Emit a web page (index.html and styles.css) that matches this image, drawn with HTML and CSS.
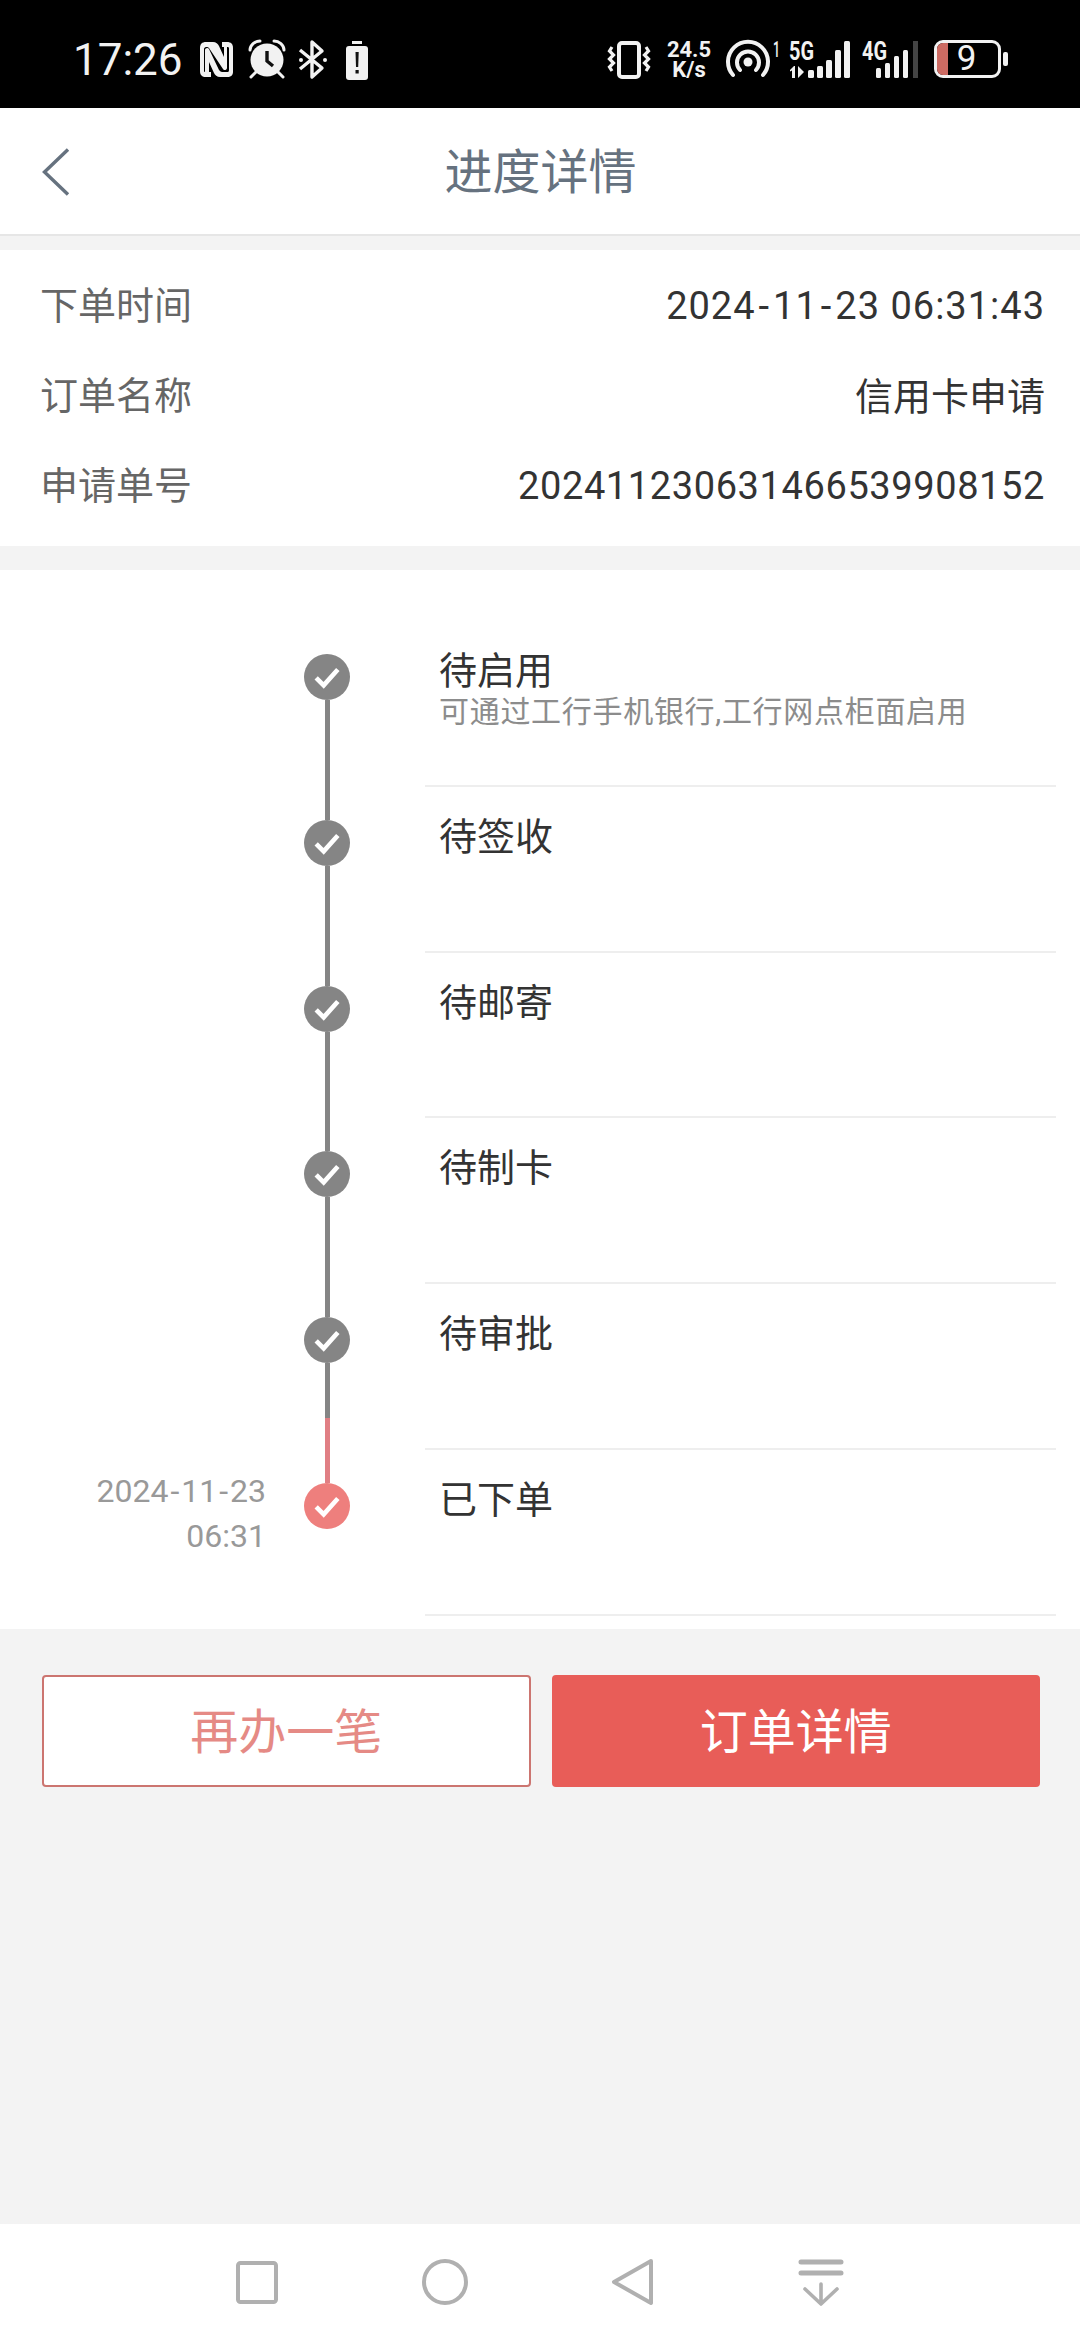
FILE: index.html
```html
<!DOCTYPE html>
<html lang="zh-CN">
<head>
    <meta charset="UTF-8">
    <meta name="viewport" content="width=device-width, initial-scale=1.0">
    <title>进度详情</title>
    <link rel="stylesheet" href="styles.css">
</head>
<body>
<div class="page">
    <!-- status bar: svg viewBoxes use the page coordinates of the screenshot -->
    <div class="status-bar">
        <span class="clock">17:26</span>
        <svg class="ic ic-nfc" viewBox="199 40 35 40"><path fill="#f2f2f2" fill-rule="evenodd" d="M206 42h7c3 0 5 2 6 4l5 11V47h-2l0-5h5c4 0 6 2 6 6v24c0 3-2 5-6 5h-7c-3 0-5-2-6-4l-5-11v10h2v5h-5c-4 0-6-2-6-6V48c0-4 2-6 6-6zm0 5c-1 0-2 1-2 2v22c0 1 1 1 2 1h-1V50c0-2 3-3 4-1l10 21c1 1 2 2 3 2h5c1 0 2 0 2-2V48c0-1-1-1-2-1v21c0 2-3 3-4 1L209 48c-1-1-1-1-3-1z"/></svg>
        <svg class="ic ic-alarm" viewBox="248 40 38 40"><circle cx="267" cy="60" r="16.500" fill="#f2f2f2"/><path d="M250 50c0-5 5-9 10-9M284 50c0-5-5-9-10-9M256 72l-5 5M278 72l5 5" stroke="#f2f2f2" stroke-width="3" fill="none" stroke-linecap="round"/><path d="M267 51v10l6 5" stroke="#111" stroke-width="3.400" fill="none"/></svg>
        <svg class="ic ic-bt" viewBox="298 40 30 40"><path d="M300 50l22 18-10 9V42l10 9-22 18" stroke="#f2f2f2" stroke-width="3.400" fill="none" stroke-linejoin="round"/><circle cx="301" cy="60" r="2" fill="#f2f2f2"/><circle cx="325" cy="60" r="2" fill="#f2f2f2"/></svg>
        <svg class="ic ic-charge" viewBox="346 40 22 40"><rect x="352" y="41" width="10" height="3" fill="#f2f2f2"/><rect x="346" y="46" width="22" height="34" rx="3" fill="#f2f2f2"/><path d="M355.500 52h3.200l-.5 15h-2.200zM355.500 70h3.200v3.500h-3.200z" fill="#111"/></svg>

        <div class="status-right">
            <svg class="ic ic-vibrate" viewBox="608 40 42 40"><rect x="619" y="43" width="20" height="34" rx="3" fill="none" stroke="#f2f2f2" stroke-width="4"/><path d="M612 47l-2.500 4 4 4-4 4 4 4-4 4 2.500 4M646 47l2.500 4-4 4 4 4-4 4 4 4-2.500 4" fill="none" stroke="#f2f2f2" stroke-width="3.200"/></svg>
            <div class="speed"><span>24.5</span><span>K/s</span></div>
            <svg class="ic ic-hotspot" viewBox="727 40 42 40"><circle cx="748" cy="62" r="4.500" fill="#f2f2f2"/><path d="M733 75a20 20 0 1 1 30 0M740 70a11 11 0 1 1 16 0" fill="none" stroke="#f2f2f2" stroke-width="4" stroke-linecap="round"/></svg>
            <svg class="ic ic-sim1" viewBox="773 40 78 40">
                <text x="773" y="57" class="sig-num" textLength="7" lengthAdjust="spacingAndGlyphs">1</text>
                <text x="789" y="60" class="sig-text" textLength="25" lengthAdjust="spacingAndGlyphs">5G</text>
                <path d="M794 66l-4 4v1.500l2-1V78h3V66zM798 66l6 6-6 6z" fill="#f2f2f2"/>
                <rect x="808" y="70" width="6" height="8" rx="1.500" fill="#f2f2f2"/>
                <rect x="817" y="66" width="6" height="12" rx="1.500" fill="#f2f2f2"/>
                <rect x="826" y="60" width="6" height="18" rx="1.500" fill="#f2f2f2"/>
                <rect x="835" y="50" width="6" height="28" rx="1.500" fill="#f2f2f2"/>
                <rect x="844" y="41" width="6" height="37" rx="1.500" fill="#f2f2f2"/>
            </svg>
            <svg class="ic ic-sim2" viewBox="862 40 57 40">
                <text x="862" y="60" class="sig-text" textLength="25" lengthAdjust="spacingAndGlyphs">4G</text>
                <rect x="876" y="68" width="5" height="10" rx="1.500" fill="#f2f2f2"/>
                <rect x="885" y="63" width="5" height="15" rx="1.500" fill="#f2f2f2"/>
                <rect x="894" y="56" width="5" height="22" rx="1.500" fill="#f2f2f2"/>
                <rect x="903" y="50" width="5" height="28" rx="1.500" fill="#f2f2f2"/>
                <rect x="913" y="41" width="5" height="37" fill="#444"/>
            </svg>
            <div class="battery">
                <div class="battery-body"><span class="battery-fill"></span><span class="battery-num">9</span></div>
                <span class="battery-nub"></span>
            </div>
        </div>
    </div>

    <header class="top-bar">
        <svg class="back" viewBox="0 0 28 48"><path d="M26 1.500L2.500 24 26 46.500" fill="none" stroke="#66727f" stroke-width="3.400"/></svg>
        <h1>进度详情</h1>
    </header>

    <section class="info">
        <div class="info-row"><span class="info-label">下单时间</span><span class="info-value info-date">2024<span class="dash">-</span>11<span class="dash">-</span>23&nbsp;06:31:43</span></div>
        <div class="info-row"><span class="info-label">订单名称</span><span class="info-value info-cjk">信用卡申请</span></div>
        <div class="info-row"><span class="info-label">申请单号</span><span class="info-value">202411230631466539908152</span></div>
    </section>

    <section class="timeline">
        <div class="step step-first">
            <div class="step-time"></div>
            <div class="axis">
                <span class="axis-top"></span>
                <span class="dot"><svg viewBox="0 0 24 24"><path d="M5.500 12.500l4.500 4.500 8.500-9.500" fill="none" stroke="#fff" stroke-width="2.800"/></svg></span>
                <span class="axis-bottom"></span>
            </div>
            <div class="step-body">
                <div class="step-title">待启用</div>
                <div class="step-note">可通过工行手机银行,工行网点柜面启用</div>
            </div>
        </div>
        <div class="step">
            <div class="step-time"></div>
            <div class="axis">
                <span class="axis-top"></span>
                <span class="dot"><svg viewBox="0 0 24 24"><path d="M5.500 12.500l4.500 4.500 8.500-9.500" fill="none" stroke="#fff" stroke-width="2.800"/></svg></span>
                <span class="axis-bottom"></span>
            </div>
            <div class="step-body"><div class="step-title">待签收</div></div>
        </div>
        <div class="step">
            <div class="step-time"></div>
            <div class="axis">
                <span class="axis-top"></span>
                <span class="dot"><svg viewBox="0 0 24 24"><path d="M5.500 12.500l4.500 4.500 8.500-9.500" fill="none" stroke="#fff" stroke-width="2.800"/></svg></span>
                <span class="axis-bottom"></span>
            </div>
            <div class="step-body"><div class="step-title">待邮寄</div></div>
        </div>
        <div class="step">
            <div class="step-time"></div>
            <div class="axis">
                <span class="axis-top"></span>
                <span class="dot"><svg viewBox="0 0 24 24"><path d="M5.500 12.500l4.500 4.500 8.500-9.500" fill="none" stroke="#fff" stroke-width="2.800"/></svg></span>
                <span class="axis-bottom"></span>
            </div>
            <div class="step-body"><div class="step-title">待制卡</div></div>
        </div>
        <div class="step">
            <div class="step-time"></div>
            <div class="axis">
                <span class="axis-top"></span>
                <span class="dot"><svg viewBox="0 0 24 24"><path d="M5.500 12.500l4.500 4.500 8.500-9.500" fill="none" stroke="#fff" stroke-width="2.800"/></svg></span>
                <span class="axis-bottom axis-fade"></span>
            </div>
            <div class="step-body"><div class="step-title">待审批</div></div>
        </div>
        <div class="step step-last">
            <div class="step-time"><span>2024<span class="dash-sm">-</span>11<span class="dash-sm">-</span>23</span><span>06:31</span></div>
            <div class="axis">
                <span class="axis-top"></span>
                <span class="dot"><svg viewBox="0 0 24 24"><path d="M5.500 12.500l4.500 4.500 8.500-9.500" fill="none" stroke="#fff" stroke-width="2.800"/></svg></span>
            </div>
            <div class="step-body"><div class="step-title">已下单</div></div>
        </div>
    </section>

    <div class="actions">
        <button class="btn btn-outline">再办一笔</button>
        <button class="btn btn-solid">订单详情</button>
    </div>

    <nav class="nav-bar">
        <svg class="nav-ic" viewBox="0 0 46 48"><rect x="4" y="5" width="38" height="39" rx="2.500" fill="none" stroke="#b0b0b0" stroke-width="4"/></svg>
        <svg class="nav-ic" viewBox="0 0 46 48"><circle cx="23" cy="24" r="21" fill="none" stroke="#b0b0b0" stroke-width="4"/></svg>
        <svg class="nav-ic" viewBox="0 0 46 48"><path d="M41 3L4 24l37 21z" fill="none" stroke="#b0b0b0" stroke-width="4" stroke-linejoin="round"/></svg>
        <svg class="nav-ic" viewBox="0 0 46 48"><path d="M3 4h40M3 15h40" stroke="#b0b0b0" stroke-width="5" stroke-linecap="round"/><path d="M23 26v19M7 31l16 15 16-15" fill="none" stroke="#b0b0b0" stroke-width="3.600" stroke-linecap="round" stroke-linejoin="round"/></svg>
    </nav>
</div>
</body>
</html>
```

FILE: styles.css
```css
* {
    box-sizing: border-box;
}
body {
    margin: 0;
    font-family: Roboto, "Noto Sans CJK SC", sans-serif;
    background-color: #f3f3f3;
}
.page {
    display: flex;
    flex-direction: column;
    width: 1080px;
    height: 2340px;
}

/* status bar */
.status-bar {
    display: flex;
    align-items: flex-start;
    height: 108px;
    padding: 40px 72px 0 73px;
    background-color: #000;
    color: #f2f2f2;
}
.clock {
    width: 111px;
    font-size: 44px;
    line-height: 40px;
}
.ic {
    display: block;
    height: 40px;
    flex: none;
    overflow: visible;
}
.ic-nfc { width: 35px; margin-left: 15px; }
.ic-alarm { width: 38px; margin-left: 14px; }
.ic-bt { width: 30px; margin-left: 12px; }
.ic-charge { width: 22px; margin-left: 18px; }
.status-right {
    display: flex;
    align-items: flex-start;
    margin-left: auto;
}
.ic-vibrate { width: 42px; }
.speed {
    display: flex;
    flex-direction: column;
    align-items: center;
    width: 48px;
    margin-left: 15px;
    font-size: 22px;
    font-weight: 700;
    line-height: 20px;
}
.ic-hotspot { width: 42px; margin-left: 14px; }
.ic-sim1 { width: 78px; margin-left: 4px; }
.ic-sim2 { width: 57px; margin-left: 11px; }
.sig-num { font-size: 22px; font-weight: 500; fill: #f2f2f2; }
.sig-text { font-size: 26px; font-weight: 700; fill: #f2f2f2; }
.battery {
    display: flex;
    align-items: center;
    height: 38px;
    margin-left: 15px;
}
.battery-body {
    position: relative;
    display: flex;
    justify-content: center;
    width: 67px;
    height: 38px;
    padding-right: 2px;
    border: 3px solid #f2f2f2;
    border-radius: 9px;
}
.battery-fill {
    position: absolute;
    left: 0;
    top: 0;
    bottom: 0;
    width: 11px;
    border-radius: 6px 0 0 6px;
    background-color: #cd6b63;
}
.battery-num {
    font-size: 35px;
    line-height: 32px;
}
.battery-nub {
    width: 5px;
    height: 14px;
    margin-left: 2px;
    border-radius: 2px;
    background-color: #f2f2f2;
}

/* title bar */
.top-bar {
    position: relative;
    display: flex;
    align-items: center;
    justify-content: center;
    height: 128px;
    background-color: #fff;
    border-bottom: 2px solid #e6e6e6;
}
.top-bar h1 {
    margin: 0;
    padding: 0 0 6px 1px;
    font-size: 48px;
    font-weight: 400;
    color: #66727f;
}
.back {
    position: absolute;
    left: 42px;
    top: 40px;
    width: 28px;
    height: 48px;
}

/* order info */
.info {
    margin-top: 14px;
    padding: 11px 35px 15px 40px;
    background-color: #fff;
}
.info-row {
    display: flex;
    align-items: center;
    justify-content: space-between;
    height: 90px;
}
.info-label {
    padding-bottom: 8px;
    font-size: 38px;
    color: #666;
}
.info-value {
    font-size: 38px;
    color: #333;
    letter-spacing: 0.6px;
}
.info-cjk {
    padding-bottom: 6px;
    letter-spacing: 0;
}
.info-date {
    letter-spacing: 1px;
}
.dash {
    margin: 0 3px;
}
.dash-sm {
    margin: 0 2px;
}

/* progress steps */
.timeline {
    margin-top: 24px;
    padding: 51px 24px 13px 0;
    background-color: #fff;
}
.step {
    display: flex;
    height: 165.8px;
}
.step-time {
    display: flex;
    flex-direction: column;
    align-items: flex-end;
    width: 266px;
    font-size: 32px;
    line-height: 45px;
    color: #999;
}
.step-last .step-time {
    padding-top: 19px;
}
.axis {
    display: flex;
    flex-direction: column;
    align-items: center;
    width: 46px;
    margin-left: 38px;
}
.axis-top {
    width: 5px;
    height: 33px;
    background-color: #858585;
}
.axis-bottom {
    flex: 1;
    width: 5px;
    background-color: #858585;
}
.axis-fade {
    background: linear-gradient(#858585 0, #858585 63%, #e07f84 63%);
}
.step-first .axis-top {
    background-color: transparent;
}
.step-last .axis-top {
    background-color: #e07f84;
}
.dot {
    display: flex;
    align-items: center;
    justify-content: center;
    width: 46px;
    height: 46px;
    border-radius: 50%;
    background-color: #858585;
}
.dot svg {
    width: 40px;
    height: 40px;
}
.step-last .dot {
    background-color: #ee7f7d;
}
.step-body {
    flex: 1;
    margin-left: 75px;
    padding: 27px 0 0 14px;
    border-bottom: 2px solid #eee;
}
.step-title {
    font-size: 38px;
    line-height: 46px;
    color: #333;
}
.step-note {
    font-size: 30px;
    line-height: 36px;
    letter-spacing: 0.7px;
    color: #8c8c8c;
}

/* buttons */
.actions {
    display: flex;
    gap: 21px;
    padding: 46px 40px 0 42px;
}
.btn {
    flex: 1;
    height: 112px;
    padding: 0 0 6px;
    border-radius: 4px;
    font-family: inherit;
    font-size: 48px;
}
.btn-outline {
    border: 2px solid #cc7570;
    background-color: #fff;
    color: #e58a85;
}
.btn-solid {
    border: 2px solid #e85d58;
    background-color: #e85d58;
    color: #fff;
}

/* system navigation */
.nav-bar {
    display: flex;
    justify-content: center;
    align-items: center;
    gap: 142px;
    height: 116px;
    margin-top: auto;
    padding-right: 3px;
    background-color: #fff;
}
.nav-ic {
    width: 46px;
    height: 48px;
}
```
